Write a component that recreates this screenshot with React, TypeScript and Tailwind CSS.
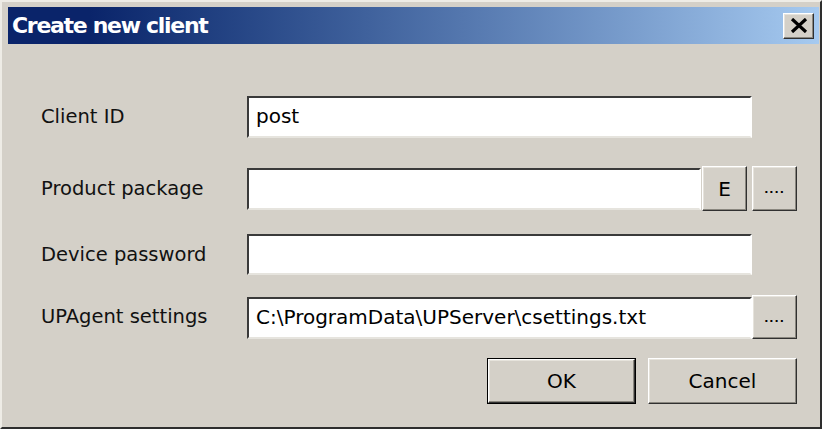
import React from 'react';

const face = "font-['DejaVu_Sans',sans-serif]";

const RaisedButton: React.FC<{ className?: string; children: React.ReactNode }> = ({ className = '', children }) => (
    <button
        className={`flex items-center justify-center bg-[#d4d0c8] border border-t-white border-l-white border-b-[#303030] border-r-[#303030] shadow-[inset_-1px_-1px_0_#8a877f,inset_1px_1px_0_#e6e3dc] text-black ${className}`}
    >
        {children}
    </button>
);

const Field: React.FC<{ value?: string; className?: string }> = ({ value = '', className = '' }) => (
    <div
        className={`flex items-center bg-white border-2 border-t-[#3a3a3a] border-l-[#3a3a3a] border-b-[#e6e4de] border-r-white pl-[7px] pb-[3px] text-[20px] text-black ${className}`}
    >
        {value}
    </div>
);

const Label: React.FC<{ text: string }> = ({ text }) => (
    <div className="w-[206px] shrink-0 text-[19.5px] text-[#111]">{text}</div>
);

export default function App() {
    return (
        <div className={`w-[826px] h-[430px] bg-white ${face}`}>
            <div className="w-[822px] h-[429px] bg-[#d4d0c8] border-2 border-t-[#eeece6] border-l-[#eeece6] border-b-[#2e2e2e] border-r-[#2e2e2e] pt-[5px] pl-[6px] pr-[1px]">
                {/* title bar */}
                <div className="h-[37px] flex items-center justify-between bg-gradient-to-r from-[#0a246a] from-10% to-[#a6caf0] pl-[4px] pr-[5px]">
                    <span className="text-white font-bold text-[22px] tracking-[-1.3px] leading-none">Create new client</span>
                    <RaisedButton className="w-[31px] h-[26px]">
                        <svg width="18" height="15" viewBox="0 0 18 15">
                            <path d="M2 1 L16 14 M16 1 L2 14" stroke="#000" strokeWidth="3.2" />
                        </svg>
                    </RaisedButton>
                </div>

                <div className="pl-[33px]">
                    <div className="mt-[52px] flex items-center">
                        <Label text="Client ID" />
                        <Field value="post" className="w-[505px] h-[42px]" />
                    </div>

                    <div className="mt-[28px] flex items-center">
                        <Label text="Product package" />
                        <Field className="w-[454px] h-[42px]" />
                        <RaisedButton className="ml-[1px] w-[45px] h-[45px] text-[20px]">E</RaisedButton>
                        <RaisedButton className="ml-[5px] w-[45px] h-[45px] text-[11px] font-bold tracking-[1px] pt-[4px]">....</RaisedButton>
                    </div>

                    <div className="mt-[23px] flex items-center">
                        <Label text="Device password" />
                        <Field className="w-[505px] h-[41px]" />
                    </div>

                    <div className="mt-[20px] flex items-end">
                        <div className="self-center">
                            <Label text="UPAgent settings" />
                        </div>
                        <Field value="C:\ProgramData\UPServer\csettings.txt" className="w-[505px] h-[42px]" />
                        <RaisedButton className="w-[45px] h-[44px] text-[11px] font-bold tracking-[1px] pt-[4px]">....</RaisedButton>
                    </div>

                    <div className="mt-[19px] flex justify-end w-[756px] gap-[12px]">
                        <div className="border border-black">
                            <RaisedButton className="w-[147px] h-[44px] text-[20px]">OK</RaisedButton>
                        </div>
                        <RaisedButton className="w-[149px] h-[46px] text-[20px]">Cancel</RaisedButton>
                    </div>
                </div>
            </div>
        </div>
    );
}
